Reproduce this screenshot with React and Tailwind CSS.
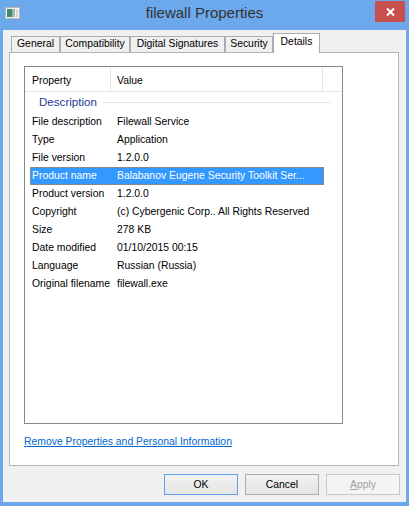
const tabs = [
  ['General', 'w-[49px]'],
  ['Compatibility', 'w-[70px]'],
  ['Digital Signatures', 'w-[95px]'],
  ['Security', 'w-[48px]'],
];

const rows = [
  ['File description', 'Filewall Service'],
  ['Type', 'Application'],
  ['File version', '1.2.0.0'],
  ['Product name', 'Balabanov Eugene Security Toolkit Ser...'],
  ['Product version', '1.2.0.0'],
  ['Copyright', '(c) Cybergenic Corp.. All Rights Reserved'],
  ['Size', '278 KB'],
  ['Date modified', '01/10/2015 00:15'],
  ['Language', 'Russian (Russia)'],
  ['Original filename', 'filewall.exe'],
];

function WindowIcon() {
  return (
    <svg width="15" height="12" viewBox="0 0 15 12">
      <rect x="0.5" y="0.5" width="14" height="11" fill="#f4f4f4" stroke="#b8b8b8" />
      <rect x="2" y="2" width="5" height="8" fill="#3f8a72" />
      <rect x="7" y="2" width="3" height="8" fill="#9fb8ae" />
      <rect x="11" y="2" width="2" height="8" fill="#d6d6d6" />
    </svg>
  );
}

function App() {
  return (
    <div className="w-[409px] h-[506px] bg-[#6ba8ec] flex flex-col font-['Liberation_Sans',Arial,sans-serif] text-[10.4px] text-black">
      {/* Title bar */}
      <div className="h-[30px] shrink-0 grid grid-cols-[1fr_auto_1fr]">
        <div className="pl-[5px] pt-[7px]">
          <WindowIcon />
        </div>
        <div className="pt-[4px] text-[15px] leading-[18px] text-[#333]">filewall Properties</div>
        <div className="flex justify-end pr-[4px]">
          <div className="w-[30px] h-[21px] mt-px bg-[#c7504f] flex items-center justify-center">
            <svg width="9" height="8" viewBox="0 0 9 8">
              <path d="M1 0.5 L8 7.5 M8 0.5 L1 7.5" stroke="#fff" strokeWidth="2" />
            </svg>
          </div>
        </div>
      </div>

      {/* Body */}
      <div className="flex-1 mx-[3px] mb-[4px] bg-[#f0f0f0] pl-[6px] pt-[3px]">
        {/* Tabs */}
        <div className="h-[20px] -mb-px flex items-start pl-[2px] relative">
          {tabs.map(([label, w]) => (
            <div
              key={label}
              className={`${w} h-[16px] mt-[3px] border border-b-0 border-[#acacac] bg-[#f0f0f0] flex items-center justify-center leading-none`}
            >
              {label}
            </div>
          ))}
          <div className="w-[47px] h-[20px] border border-b-0 border-[#acacac] bg-white relative z-10 flex items-center justify-center leading-none pb-[2px]">
            Details
          </div>
        </div>

        {/* Tab page */}
        <div className="w-[390px] h-[414px] border border-[#b4b4b4] bg-white">
          <div className="ml-[14px] mt-[13px] w-[319px] h-[358px] border border-[#828790] bg-white">
            {/* Header */}
            <div className="h-[25px] flex border-b border-[#e5e9ee]">
              <div className="w-[86px] pl-[7px] pt-[3px] border-r border-[#e5e5e5] flex items-center">Property</div>
              <div className="w-[212px] pl-[6px] pt-[3px] border-r border-[#e5e5e5] flex items-center">Value</div>
            </div>

            {/* Group */}
            <div className="h-[20px] flex items-center pl-[14px] pr-[11px]">
              <span className="text-[11.6px] text-[#1e3a96] leading-none">Description</span>
              <div className="flex-1 h-px bg-[#e2e6ec] ml-[5px]" />
            </div>

            <div className="pt-px">
              {rows.map(([label, value]) => {
                const sel = label === 'Product name';
                return (
                  <div
                    key={label}
                    className={`h-[18px] ml-[5px] w-[294px] flex items-center whitespace-nowrap ${
                      sel ? 'bg-[#3399ff] text-white outline-1 outline-dotted outline-[#d0801e] -outline-offset-1' : ''
                    }`}
                  >
                    <div className="w-[87px] pl-[2px]">{label}</div>
                    <div>{value}</div>
                  </div>
                );
              })}
            </div>
          </div>

          <div className="ml-[14px] mt-[10px]">
            <a className="text-[#0066cc] underline leading-[13px] cursor-pointer">
              Remove Properties and Personal Information
            </a>
          </div>
        </div>

        {/* Buttons */}
        <div className="w-[391px] mt-[8px] flex justify-end gap-[7px]">
          <button className="w-[74px] h-[21px] border border-[#5ea1e8] bg-gradient-to-b from-[#f2f2f2] to-[#e5e5e5] flex items-center justify-center">
            OK
          </button>
          <button className="w-[74px] h-[21px] border border-[#acacac] bg-gradient-to-b from-[#f2f2f2] to-[#e5e5e5] flex items-center justify-center">
            Cancel
          </button>
          <button className="w-[74px] h-[21px] border border-[#c8c8c8] bg-[#f4f4f4] text-[#a0a0a0] flex items-center justify-center">
            <span>
              <span className="underline">A</span>pply
            </span>
          </button>
        </div>
      </div>
    </div>
  );
}

export default App;
